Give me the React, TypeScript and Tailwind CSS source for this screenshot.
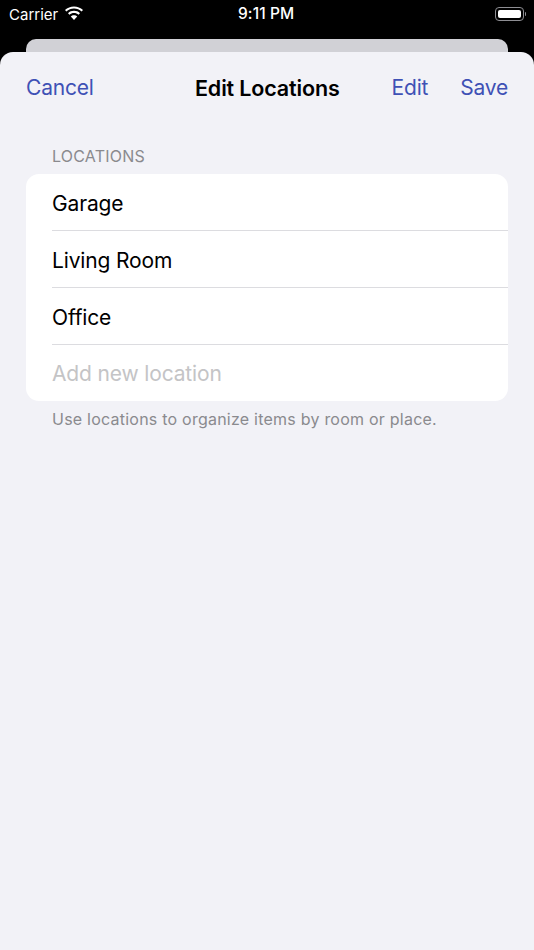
export default function App() {
  const rows = ['Garage', 'Living Room', 'Office'];

  return (
    <div className="w-[534px] h-[950px] bg-black overflow-hidden flex flex-col font-['Inter',sans-serif]">
      {/* status bar */}
      <div className="h-[28px] flex items-center justify-between text-white relative shrink-0">
        <div className="flex items-center pl-[9px] gap-[6px]">
          <span className="text-[15px] leading-none">Carrier</span>
          <svg width="20" height="15" viewBox="0 0 20 15" className="-mt-[2px]">
            <path d="M10 2.6c2.900 0 5.600 1.100 7.600 3l1.400-1.600C16.600 1.700 13.400.4 10 .4S3.400 1.700 1 4l1.400 1.600c2-1.900 4.700-3 7.600-3z" fill="#fff" />
            <path d="M10 7c1.700 0 3.300.6 4.500 1.800l1.500-1.600C14.400 5.600 12.300 4.800 10 4.800s-4.400.8-6 2.400l1.500 1.600C6.700 7.600 8.300 7 10 7z" fill="#fff" />
            <path d="M10 9.200c-1.300 0-2.400.5-3.200 1.300L10 14l3.200-3.500c-.8-.8-1.900-1.300-3.200-1.300z" fill="#fff" />
          </svg>
        </div>
        <span className="absolute left-[238px] text-[15.500px] font-medium leading-none tracking-[0.1px]">9:11 PM</span>
        <div className="flex items-center pr-[8px]">
          <div className="w-[29px] h-[14px] rounded-[4px] border border-[#8e8e93] p-[2px]">
            <div className="w-full h-full bg-white rounded-[2px]" />
          </div>
          <div className="w-[1.5px] h-[4px] ml-[1px] bg-[#8e8e93] rounded-r-sm" />
        </div>
      </div>

      <div className="h-[11px] shrink-0" />

      {/* card behind the sheet */}
      <div className="h-[13px] mx-[26px] bg-[#d1d1d6] rounded-t-[10px] shrink-0" />

      {/* sheet */}
      <div className="flex-1 bg-[#f2f2f7] rounded-t-[13px]">
        <div className="h-[72px] pl-[26px] pr-[26px] flex items-center justify-between relative text-[21px] text-[#3f51b5] tracking-[-0.2px]">
          <span>Cancel</span>
          <span className="absolute left-[195px] text-black font-semibold text-[21.500px] tracking-[-0.15px]">Edit Locations</span>
          <div className="flex gap-[32px]">
            <span>Edit</span>
            <span>Save</span>
          </div>
        </div>

        <div className="px-[26px] pt-[23px]">
          <div className="pl-[26px] text-[16px] leading-[19px] text-[#8a8a8e] tracking-[0.2px] mb-[8px]">LOCATIONS</div>
          <div className="bg-white rounded-[13px] overflow-hidden">
            {rows.map((row) => (
              <div key={row} className="ml-[26px] h-[57px] pt-[3px] flex items-center border-b border-[#dcdce0] text-[21px] text-black tracking-[-0.15px]">
                {row}
              </div>
            ))}
            <div className="ml-[26px] h-[56px] pt-[2px] flex items-center text-[21px] text-[#c4c4c6] tracking-[-0.15px]">
              Add new location
            </div>
          </div>
          <div className="pl-[26px] pt-[8px] text-[16px] leading-[20px] text-[#8a8a8e] tracking-[0.23px]">
            Use locations to organize items by room or place.
          </div>
        </div>
      </div>
    </div>
  );
}
